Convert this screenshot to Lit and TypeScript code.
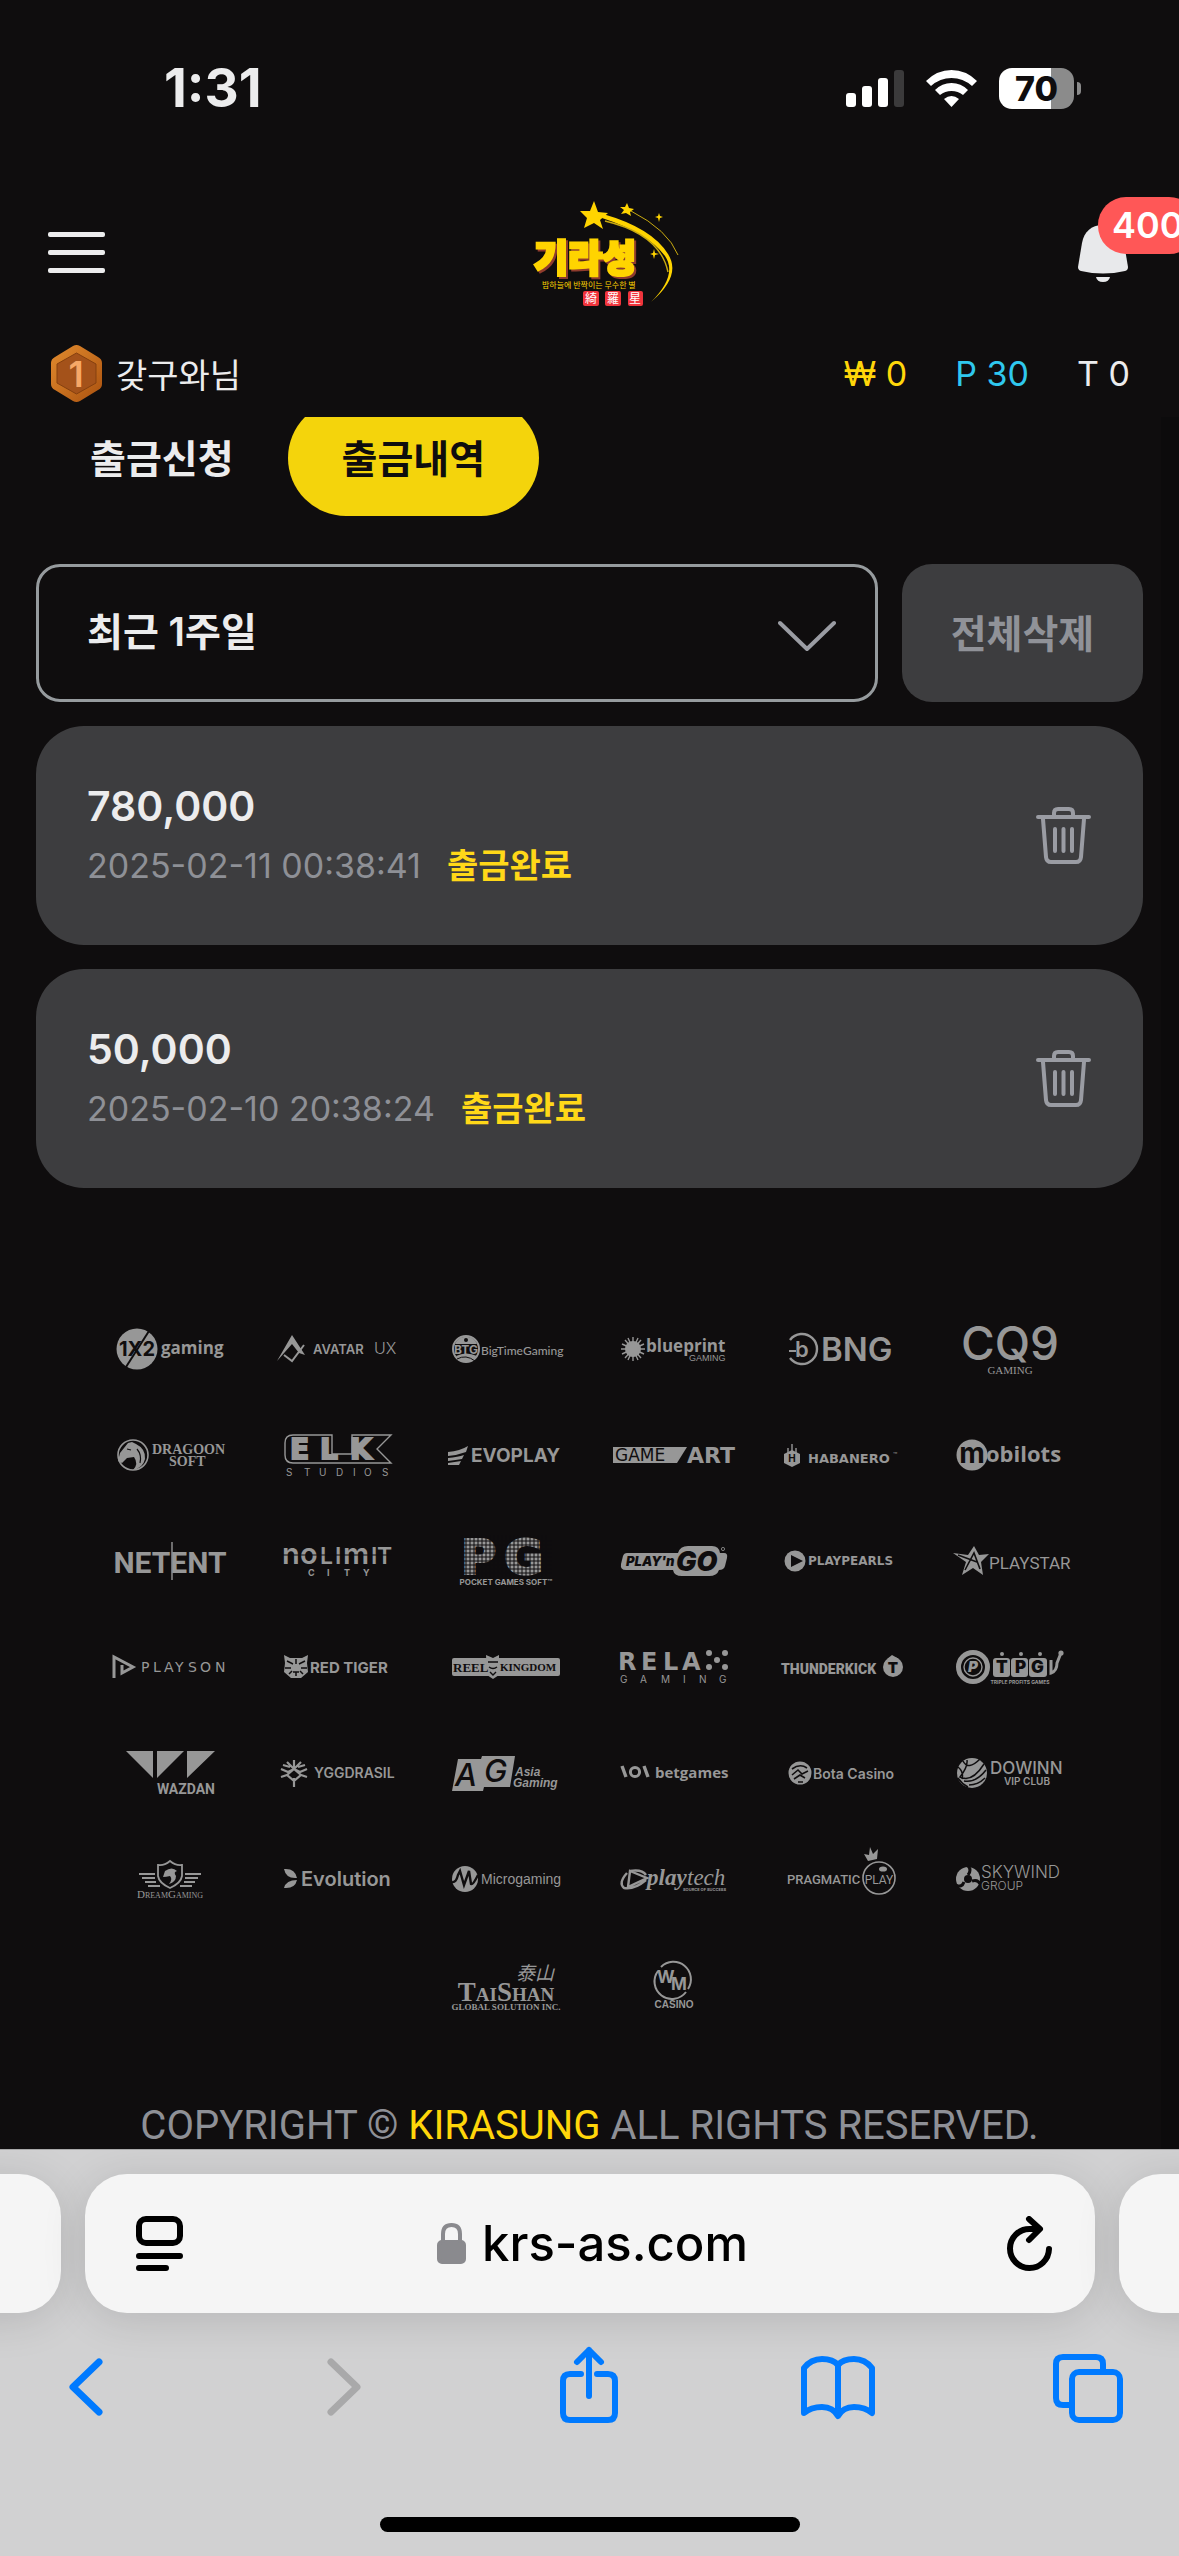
import { LitElement, html, svg, css } from 'lit';
import { customElement, property, state } from 'lit/decorators.js';

interface Withdrawal {
  id: number;
  amount: string;
  date: string;
  status: string;
}

// Every provider mark is drawn around 0,0 in a 168x106 cell
const PROVIDERS = [
  {
    name: '1X2 Gaming',
    art: svg`
      <circle cx="-33" cy="0" r="20.5" />
      <path class="cut" d="M-44 18 L-21 -18" stroke-width="2" />
      <text class="dark bold" x="-33" y="7" font-size="20" text-anchor="middle">1X2</text>
      <text class="open bold" x="-9" y="5" font-size="17">gaming</text>`,
  },
  {
    name: 'Avatar UX',
    art: svg`
      <path d="M-61 12 L-46 -14 L-33 6 L-39 4 L-46 -5 Z" />
      <path class="line" d="M-54 6 L-46 12 L-34 -4" stroke-width="2" />
      <text class="semi" x="-25" y="5" font-size="13">AVATAR</text>
      <text class="light" x="36" y="5" font-size="16">UX</text>`,
  },
  {
    name: 'Big Time Gaming',
    art: svg`
      <circle class="line" cx="-40" cy="0" r="13" stroke-width="2" />
      <path d="M-51 -5 A12 12 0 0 1 -29 -5 Z M-50 7 Q-40 2 -29 7 A12 12 0 0 1 -50 7 Z" />
      <path class="cut" d="M-49 10 Q-40 5 -31 12" stroke-width="1" />
      <circle class="dark" cx="-40" cy="-9" r="2" />
      <text class="bold" x="-40" y="5" font-size="12" text-anchor="middle">BTG</text>
      <text class="lato medium" x="-25" y="6" font-size="12">BigTimeGaming</text>`,
  },
  {
    name: 'Blueprint Gaming',
    art: svg`
      <circle cx="-41" cy="0" r="8" />
      <path class="line" d="M-41 -12V12M-53 0H-29M-49 -9L-33 9M-33 -9L-49 9M-46 -11L-36 11M-36 -11L-46 11M-52 -5L-30 5M-30 -5L-52 5" stroke-width="1.4" />
      <text class="open bold" x="-28" y="3" font-size="17">blueprint</text>
      <text class="liberation" x="15" y="12" font-size="9">GAMING</text>`,
  },
  {
    name: 'BNG',
    art: svg`
      <path class="line" d="M-52 -9 A15 15 0 1 1 -52 9" stroke-width="2.4" />
      <text class="semi" x="-47" y="8" font-size="22">b</text>
      <path class="line" d="M-53 2 H-46" stroke-width="2" />
      <text class="semi" x="-21" y="12" font-size="33">BNG</text>`,
  },
  {
    name: 'CQ9 Gaming',
    art: svg`
      <text class="medium" x="0" y="11" font-size="46" text-anchor="middle">CQ9</text>
      <text class="serif" x="0" y="25" font-size="11" text-anchor="middle">GAMING</text>`,
  },
  {
    name: 'Dragoon Soft',
    art: svg`
      <circle class="line" cx="-37" cy="0" r="15" stroke-width="1.6" />
      <path d="M-52 6 L-50 -2 L-42 -12 L-38 -13 L-34 -11 Q-24 -6 -25 4 Q-27 13 -37 15 Q-31 9 -36 2 L-43 3 L-48 8 Z" />
      <path class="cut" d="M-43 -6 L-39 -5 M-33 -6 Q-28 0 -30 8" stroke-width="1.2" />
      <text class="serif bold" x="-18" y="-1" font-size="14">DRAGOON</text>
      <text class="serif bold" x="-1" y="11" font-size="14">SOFT</text>`,
  },
  {
    name: 'ELK Studios',
    art: svg`
      <path class="line" d="M-45 -20H-6V-1H14V-20H53L39 -6L53 8H-45Q-53 8 -53 0V-12Q-53 -20 -45 -20Z" stroke-width="1.4" />
      <text class="dejavu bold thick" x="-48 -18 12" y="4" font-size="28">ELK</text>
      <text x="-52 -34 -19 -2 15 26 44" y="21" font-size="10">STUDIOS</text>`,
  },
  {
    name: 'Evoplay',
    art: svg`
      <path d="M-58 -3Q-46 -4 -38 -9L-40 -3Q-48 0 -58 1ZM-58 3Q-48 2 -42 0L-44 4Q-50 5 -58 6ZM-58 8L-45 6L-47 10H-58Z" />
      <text class="bold" x="-35" y="7" font-size="19">EVOPLAY</text>`,
  },
  {
    name: 'GameArt',
    art: svg`
      <path d="M-61 -8H13L3 8H-61Z" />
      <text class="dark dejavu" x="-59" y="6" font-size="17">GAME</text>
      <text class="dejavu bold" x="61" y="8" font-size="22" text-anchor="end">ART</text>`,
  },
  {
    name: 'Habanero',
    art: svg`
      <path d="M-50 -5L-42 -1V8L-50 12L-58 8V-1Z" />
      <path class="line" d="M-50 -11V-4M-54 -7V-2M-46 -7V-2" stroke-width="1.4" />
      <text class="dark bold" x="-50" y="7" font-size="10" text-anchor="middle">H</text>
      <text class="dejavu bold" x="-34" y="8" font-size="13">HABANERO</text>
      <text x="51" y="3" font-size="7">™</text>`,
  },
  {
    name: 'Mobilots',
    art: svg`
      <circle cx="-38" cy="0" r="15.5" />
      <text class="dark bold" x="-38" y="8" font-size="28" text-anchor="middle">m</text>
      <text class="open bold" x="-24" y="7" font-size="22">obilots</text>`,
  },
  {
    name: 'NetEnt',
    art: svg`
      <text class="roboto bold" x="0" y="12" font-size="30" text-anchor="middle">NETENT</text>
      <path class="line" d="M2 -19V19" stroke-width="1.4" />`,
  },
  {
    name: 'Nolimit City',
    art: svg`
      <text class="semi" y="3"><tspan x="-56 -38" font-size="29">no</tspan><tspan x="-18 -3" font-size="23">LI</tspan><tspan x="5" font-size="29">m</tspan><tspan x="33 39" font-size="23">IT</tspan></text>
      <path class="cut" d="M-56 -6H54" stroke-width="1" />
      <text class="bold" x="-30 -11 6 25" y="15" font-size="9">CITY</text>`,
  },
  {
    name: 'Pocket Games Soft',
    art: svg`
      <text class="dejavu bold thick" x="-45 -2" y="13" font-size="48">PG</text>
      <path class="cut" stroke-width="1" d="M-46 -20H46M-46 -16H46M-46 -12H46M-46 -8H46M-46 -4H46M-46 0H46M-46 4H46M-46 8H46M-46 12H46M-44 -26V16M-40 -26V16M-36 -26V16M-32 -26V16M-28 -26V16M-24 -26V16M-20 -26V16M-16 -26V16M-12 -26V16M-8 -26V16M-4 -26V16M0 -26V16M4 -26V16M8 -26V16M12 -26V16M16 -26V16M20 -26V16M24 -26V16M28 -26V16M32 -26V16M36 -26V16M40 -26V16" />
      <text class="bold" x="0" y="24" font-size="8" text-anchor="middle">POCKET GAMES SOFT™</text>`,
  },
  {
    name: "Play'n GO",
    art: svg`
      <path d="M-47 -8H4Q6 -15 14 -15H38Q45 -15 46 -8H50Q54 -8 53 -3L51 5Q50 9 45 9Q43 15 35 15H8Q0 15 -1 9H-48Q-54 9 -53 3L-51 -5Q-50 -8 -47 -8Z" />
      <text class="dark black italic" x="-48" y="5" font-size="13">PLAY'n</text>
      <text class="dark black italic" x="2" y="10" font-size="27">GO</text>
      <circle class="line" cx="49" cy="-12" r="1.6" stroke-width="0.8" />`,
  },
  {
    name: 'PlayPearls',
    art: svg`
      <circle cx="-47" cy="0" r="10.5" />
      <path class="dark" d="M-51 -6L-39 0L-51 6Z" />
      <text class="dejavu bold" x="-34" y="4" font-size="12">PLAYPEARLS</text>`,
  },
  {
    name: 'Playstar',
    art: svg`
      <path d="M-36 -15L-31 -6L-21 -7L-29 1L-27 14L-37 7L-48 14L-44 1L-57 -8L-42 -6Z" />
      <path class="cut" d="M-45 9L-36 -8L-30 8M-52 -6L-33 1" stroke-width="1.6" />
      <text class="roboto" x="-21" y="8" font-size="17">PLAYSTAR</text>`,
  },
  {
    name: 'Playson',
    art: svg`
      <path class="line" d="M-56 11V-10L-37 0L-48 6V-2" stroke-width="3" />
      <text class="dejavu" x="-29 -17 -6 5 18 30 45" y="5" font-size="14">PLAYSON</text>`,
  },
  {
    name: 'Red Tiger',
    art: svg`
      <path d="M-54 -12L-48 -9H-36L-30 -12L-31 -4L-30 5L-37 11H-47L-54 5L-53 -4Z" />
      <path class="cut" d="M-51 -6L-45 -3M-33 -6L-39 -3M-42 -8V-3M-53 1L-47 1M-31 1L-37 1M-45 5H-39M-42 5V9M-49 7L-46 4M-35 7L-38 4" stroke-width="1.5" />
      <text class="bold" x="-28" y="6" font-size="15">RED TIGER</text>`,
  },
  {
    name: 'Reel Kingdom',
    art: svg`
      <rect x="-54" y="-9" width="108" height="18" rx="2" />
      <path d="M-20 -12L-13 -9L-7 -12V8L-13 12L-19 8Z" />
      <text class="dark serif bold" x="-53" y="5" font-size="13">REEL</text>
      <path class="cut" d="M-18 -5H-8M-17 0Q-13 3 -9 0M-16 5L-13 8L-10 5" stroke-width="1.4" />
      <text class="dark serif bold" x="-6" y="4" font-size="11">KINGDOM</text>`,
  },
  {
    name: 'Relax Gaming',
    art: svg`
      <text class="dejavu bold" x="-56 -33 -11 8" y="3" font-size="24">RELA</text>
      <circle cx="35" cy="-14" r="3" /><circle cx="51" cy="-14" r="3" /><circle cx="43" cy="-7" r="3" />
      <circle cx="35" cy="0" r="3" /><circle cx="51" cy="0" r="3" />
      <text x="-54 -34 -13 9 25 45" y="16" font-size="10">GAMING</text>`,
  },
  {
    name: 'Thunderkick',
    art: svg`
      <text class="roboto black" x="-61" y="7" font-size="14">THUNDERKICK</text>
      <circle cx="51" cy="0" r="10" /><path d="M45 -8L50 -12L57 -8Z" />
      <text class="dark black" x="51" y="6" font-size="15" text-anchor="middle">T</text>`,
  },
  {
    name: 'Triple Profits Games',
    art: svg`
      <circle class="line" cx="-37" cy="0" r="14.5" stroke-width="5" />
      <circle class="line" cx="-37" cy="0" r="9" stroke-width="1.4" />
      <text class="black italic" x="-37" y="5" font-size="15" text-anchor="middle">P</text>
      <rect x="-17" y="-9" width="17" height="19" rx="3" /><rect x="1" y="-9" width="17" height="19" rx="3" /><rect x="19" y="-9" width="18" height="19" rx="3" />
      <text class="dark black" x="-14 5 21" y="6" font-size="17">TPG</text>
      <circle cx="-8" cy="-13" r="2" /><circle cx="11" cy="-13" r="2" /><circle cx="30" cy="-13" r="2" />
      <path class="line" d="M41 -7V6Q47 4 47 -4L51 -14" stroke-width="3" /><circle cx="51" cy="-14" r="2.6" />
      <text class="bold" x="10" y="17" font-size="5" text-anchor="middle">TRIPLE PROFITS GAMES</text>`,
  },
  {
    name: 'Wazdan',
    art: svg`
      <path d="M-44 -22H-17V5ZM-13 -22H14L-13 5ZM17 -22H45L17 5Z" />
      <text class="roboto bold" x="45" y="21" font-size="14" text-anchor="end">WAZDAN</text>`,
  },
  {
    name: 'Yggdrasil',
    art: svg`
      <path class="line" d="M-44 14V5M-44 8L-51 2L-57 4M-44 8L-37 2L-31 4M-51 2L-44 -4L-37 2M-57 -4L-50 -1L-44 -4L-38 -1L-31 -4M-44 -4V-13M-44 -4L-51 -11M-44 -4L-37 -11M-55 -8L-48 -6M-33 -8L-40 -6" stroke-width="2.2" />
      <text class="semi" x="-24" y="5" font-size="14">YGGDRASIL</text>`,
  },
  {
    name: 'Asia Gaming',
    art: svg`
      <path d="M-48 -14H-25L-24 -17H9L4 14H-22L-23 18H-54Z" />
      <text class="dark medium italic" x="-51" y="13" font-size="31">A</text>
      <text class="dark medium italic" x="-22" y="9" font-size="31">G</text>
      <text class="liberation bold italic" x="9" y="3" font-size="12">Asia</text>
      <text class="liberation bold italic" x="7" y="14" font-size="12">Gaming</text>`,
  },
  {
    name: 'Betgames',
    art: svg`
      <path class="line" d="M-52 -7L-48 4M-30 -7L-26 4" stroke-width="3.4" />
      <circle class="line" cx="-39" cy="-1" r="4.6" stroke-width="3" />
      <text class="open bold" x="-19" y="5" font-size="15">betgames</text>`,
  },
  {
    name: 'Bota Casino',
    art: svg`
      <circle cx="-42" cy="0" r="11.5" />
      <path class="cut" d="M-50 2L-44 -3L-40 1L-34 -2M-48 6L-42 2L-37 5M-50 -4Q-42 -10 -35 -5M-44 9H-39" stroke-width="1.6" />
      <text class="semi" x="-29" y="6" font-size="14">Bota Casino</text>`,
  },
  {
    name: 'Dowinn VIP Club',
    art: svg`
      <circle cx="-38" cy="0" r="15" />
      <path class="cut" d="M-52 -6Q-46 -1 -48 6M-47 -12Q-42 -2 -30 -14M-43 -13Q-42 -6 -50 4Q-38 10 -26 -9M-46 8Q-34 10 -24 -3M-41 12Q-32 12 -25 5M-52 5Q-48 11 -42 14" stroke-width="1.5" />
      <text class="medium" x="-20" y="1" font-size="17">DOWINN</text>
      <text class="semi" x="17" y="12" font-size="10" text-anchor="middle">VIP CLUB</text>`,
  },
  {
    name: 'Dream Gaming',
    art: svg`
      <path class="line" d="M0 -18Q6 -13 12 -14V-3Q11 4 0 9Q-11 4 -12 -3V-14Q-6 -13 0 -18Z" stroke-width="1.8" />
      <path d="M-5 -8Q2 -13 7 -8Q3 -7 6 -3Q6 3 -1 5Q3 0 0 -3Q-4 -2 -7 -2Z" />
      <path class="line" d="M-31 -5H-15M-28 -1H-15M-25 3H-14M-22 7H-10M31 -5H15M28 -1H15M25 3H14M22 7H10" stroke-width="1.8" />
      <text class="serif caps" x="0" y="19" font-size="11" text-anchor="middle">DreamGaming</text>`,
  },
  {
    name: 'Evolution',
    art: svg`
      <path d="M-54 -10Q-43 -11 -41 -1Q-52 0 -54 -10ZM-54 9Q-52 1 -41 1Q-43 10 -54 9Z" />
      <text class="semi" x="-37" y="7" font-size="20">Evolution</text>`,
  },
  {
    name: 'Microgaming',
    art: svg`
      <circle cx="-41" cy="0" r="13" />
      <path class="cut" d="M-54 3Q-50 4 -48 -4L-46 -8L-42 6L-37 -8L-35 5Q-33 6 -28 -4" stroke-width="2.4" />
      <text class="liberation" x="-25" y="5" font-size="14">Microgaming</text>`,
  },
  {
    name: 'Playtech',
    art: svg`
      <path class="line" d="M-44 -8L-27 -1L-46 8ZM-47 -6Q-56 4 -50 9Q-40 11 -28 1M-44 -8Q-32 -10 -28 -4" stroke-width="2.4" />
      <text class="serif bold italic" x="-27" y="6" font-size="23">play</text>
      <text class="serif italic" x="13" y="6" font-size="23">tech</text>
      <text class="bold" x="9" y="12" font-size="4">SOURCE OF SUCCESS</text>`,
  },
  {
    name: 'Pragmatic Play',
    art: svg`
      <text class="roboto medium" x="-55" y="5" font-size="13">PRAGMATIC</text>
      <circle class="line" cx="37" cy="-1" r="16" stroke-width="1.6" />
      <text class="roboto" x="37" y="5" font-size="12" text-anchor="middle">PLAY</text>
      <ellipse cx="41" cy="-10" rx="4" ry="2.6" />
      <path d="M26 -18L22 -25L27 -24L28 -32L31 -25L36 -30L35 -20Z" />`,
  },
  {
    name: 'Skywind Group',
    art: svg`
      <circle cx="-42" cy="0" r="12" />
      <circle class="dark" cx="-42" cy="0" r="4" />
      <path class="cut" d="M-42 -4Q-38 -9 -42 -13M-38 2Q-32 0 -30 5M-46 3Q-48 9 -54 6" stroke-width="3" />
      <text class="light" x="-29" y="-1" font-size="17">SKYWIND</text>
      <text class="light" x="-29" y="11" font-size="12">GROUP</text>`,
  },
  {
    name: 'TaiShan',
    art: svg`
      <text class="kr italic" x="10" y="-5" font-size="19">泰山</text>
      <text class="serif bold caps" x="0" y="16" font-size="27" text-anchor="middle">TaiShan</text>
      <text class="serif bold" x="0" y="25" font-size="9" text-anchor="middle">GLOBAL SOLUTION INC.</text>`,
  },
  {
    name: 'WM Casino',
    art: svg`
      <path class="line" d="M-13 -18A17.5 17.5 0 0 1 14 4M12 7A17.5 17.5 0 0 1 -16 -14" stroke-width="2" />
      <text class="bold" x="-17 -3" y="-2 5" font-size="17">WM</text>
      <text class="liberation bold" x="0" y="23" font-size="10" text-anchor="middle">CASINO</text>`,
  },
];

@customElement('phone-status')
export class PhoneStatus extends LitElement {
  static styles = css`
    :host {
      display: flex;
      align-items: center;
      justify-content: space-between;
      height: 176px;
      padding: 0 98px 0 164px;
      box-sizing: border-box;
    }

    .time {
      font-size: 53px;
      font-weight: 700;
    }

    .icons {
      display: flex;
      align-items: center;
      gap: 22px;
    }

    svg {
      display: block;
      fill: #fff;
    }

    .off {
      fill: #3b3a3b;
    }

    .power {
      display: flex;
      align-items: center;
      gap: 3px;
    }

    .battery {
      width: 75px;
      height: 41px;
      border-radius: 13px;
      font-size: 34px;
      font-weight: 800;
      line-height: 41px;
      text-align: center;
      color: #0f0d0e;
      background: linear-gradient(to right, #fff 70%, #8b8b8b 70%);
    }

    .tip {
      width: 4px;
      height: 13px;
      border-radius: 0 4px 4px 0;
      background: #8b8b8b;
    }
  `;

  render() {
    return html`
      <span class="time">1:31</span>
      <div class="icons">
        <svg width="58" height="37" viewBox="0 0 58 37">
          <rect y="23" width="10" height="14" rx="3" />
          <rect x="16" y="16" width="10" height="21" rx="3" />
          <rect x="32" y="8" width="10" height="29" rx="3" />
          <rect class="off" x="48" width="10" height="37" rx="3" />
        </svg>
        <svg width="51" height="37" viewBox="0 0 51 37">
          <path
            d="M0 11Q11 0 25.500 0T51 11L46 16Q37 8 25.500 8T5 16ZM9 20Q16 13 25.500 13T42 20L37 25Q32 21 25.500 21T14 25ZM18 29Q25.500 23 33 29L25.500 37Z"
          />
        </svg>
        <div class="power">
          <div class="battery">70</div>
          <div class="tip"></div>
        </div>
      </div>
    `;
  }
}

@customElement('site-header')
export class SiteHeader extends LitElement {
  static styles = css`
    :host {
      display: block;
      overflow: hidden;
    }

    .bar {
      display: grid;
      grid-template-columns: 1fr auto 1fr;
      align-items: center;
      height: 154px;
      padding: 0 51px 0 48px;
    }

    button {
      padding: 0;
      border: 0;
      background: none;
      font: inherit;
      color: inherit;
    }

    svg {
      display: block;
      overflow: visible;
    }

    .menu {
      justify-self: start;
    }

    .bell {
      position: relative;
      justify-self: end;
    }

    .badge {
      position: absolute;
      left: 20px;
      top: -28px;
      height: 57px;
      padding: 0 14px;
      border-radius: 28px;
      background: #ff5757;
      color: #fff;
      font-size: 36px;
      font-weight: 600;
      line-height: 57px;
    }

    .kr {
      font-family: 'Noto Sans CJK KR', sans-serif;
    }

    .wordmark {
      font-weight: 900;
      fill: #ffd400;
      stroke: #ffd400;
      stroke-width: 3;
      filter: drop-shadow(2px 2px 0 #8f3b2d);
    }

    .user {
      display: flex;
      align-items: center;
      height: 87px;
      padding: 0 49px 0 51px;
      font-size: 34px;
    }

    .name {
      margin-left: 14px;
      flex: 1;
    }

    .wallet {
      display: flex;
      gap: 48px;
    }

    .won {
      color: #ffd60a;
    }

    .point {
      color: #2fc8ee;
    }
  `;

  @property({ type: Number }) alerts = 0;

  render() {
    return html`
      <div class="bar">
        <button class="menu" aria-label="메뉴">
          <svg width="57" height="42" viewBox="0 0 57 42" fill="#ececed">
            <rect width="57" height="5" rx="2" />
            <rect y="18" width="57" height="5" rx="2" />
            <rect y="36" width="57" height="5" rx="2" />
          </svg>
        </button>
        <svg width="180" height="140" viewBox="0 3 180 140" fill="#ffd400">
          <path
            d="M96 21L100 32L110 33L102 40L105 49L96 43L86 48L89 38L82 31L92 31Z"
          />
          <path d="M129 23L131 28L136 29L132 32L133 36L128 33L123 34L126 30L122 27L127 27Z" />
          <path d="M105 34Q154 48 170 74Q184 96 153 122Q180 95 167 76Q150 53 104 38Z" />
          <g fill="none" stroke="#c9aa10">
            <path d="M107 41Q162 54 170 92" stroke-width="1.4" />
            <path d="M133 31Q170 50 180 75" />
          </g>
          <path
            d="M161 33L162 36L165 37L162 38L161 42L160 38L157 37L160 36ZM156 69L157 73L161 74L157 75L156 79L155 75L152 74L155 73Z"
          />
          <text class="kr wordmark" x="36" y="92" font-size="37">기라성</text>
          <text class="kr" x="44" y="108" font-size="8">밤하늘에 반짝이는 무수한 별</text>
          <g fill="#f0343c">
            <rect x="85" y="111" width="16" height="15" rx="2" />
            <rect x="107" y="111" width="16" height="15" rx="2" />
            <rect x="130" y="111" width="15" height="15" rx="2" />
          </g>
          <text class="kr" x="87 109 131" y="123" font-size="12" fill="#fff">綺羅星</text>
        </svg>
        <button class="bell" aria-label="알림">
          <svg width="50" height="57" viewBox="0 0 50 57" fill="#e8e9eb">
            <path
              d="M25 0C13 0 6 7 4 18L0 42Q0 45 3 46Q25 51 47 46Q50 45 50 42L46 18C44 7 37 0 25 0Z"
            />
            <path d="M18 52H32Q31 57 25 57T18 52Z" />
          </svg>
          <span class="badge">${this.alerts}</span>
        </button>
      </div>
      <div class="user">
        <svg width="51" height="57" viewBox="0 0 51 57">
          <defs>
            <linearGradient id="rim" x1="0" y1="0" x2="1" y2="1">
              <stop offset="0" stop-color="#e08a2e" />
              <stop offset="0.5" stop-color="#c8701f" />
              <stop offset="1" stop-color="#a8500f" />
            </linearGradient>
          </defs>
          <path
            d="M22 1Q25.500 -1 29 1L47 12Q51 14 51 18V39Q51 43 47 45L29 56Q25.500 58 22 56L4 45Q0 43 0 39V18Q0 14 4 12Z"
            fill="url(#rim)"
          />
          <path d="M25.500 8L45 19V38L25.500 49L6 38V19Z" fill="#a4521a" stroke="#85400f" />
          <text
            x="25"
            y="42"
            font-size="36"
            font-weight="600"
            text-anchor="middle"
            fill="#f6a867"
          >
            1
          </text>
        </svg>
        <span class="name">갖구와님</span>
        <div class="wallet">
          <span class="won">₩ 0</span>
          <span class="point">P 30</span>
          <span>T 0</span>
        </div>
      </div>
    `;
  }
}

@customElement('withdraw-history')
export class WithdrawHistory extends LitElement {
  static styles = css`
    :host {
      display: block;
      padding: 0 36px;
    }

    button,
    select {
      font: inherit;
      color: inherit;
    }

    .tabs {
      display: flex;
      margin-top: -17px;
      font-size: 39px;
      font-weight: 600;
    }

    .tabs button {
      height: 116px;
      padding: 0 54px 4px;
      border: 0;
      border-radius: 58px;
      background: none;
    }

    .tabs .on {
      background: #f4d40c;
      color: #0f0d0e;
    }

    .filter {
      display: flex;
      gap: 24px;
      margin: 48px 0 24px;
      font-size: 39px;
      font-weight: 600;
    }

    .period {
      display: grid;
      align-items: center;
      flex: 1;
    }

    .period > * {
      grid-area: 1 / 1;
    }

    .period svg {
      justify-self: end;
      margin-right: 42px;
      pointer-events: none;
    }

    select {
      appearance: none;
      width: 100%;
      height: 138px;
      padding: 0 48px 4px;
      border: 3px solid #969b9e;
      border-radius: 24px;
      background: none;
    }

    .clear {
      width: 241px;
      padding: 0 0 4px;
      border: 0;
      border-radius: 30px;
      background: #3d3d3f;
      color: #909298;
    }

    ul {
      display: grid;
      gap: 24px;
      margin: 0;
      padding: 0;
      list-style: none;
    }

    li {
      display: flex;
      align-items: center;
      justify-content: space-between;
      height: 219px;
      padding: 0 52px 0 51px;
      border-radius: 48px;
      background: #3d3d3f;
    }

    li p {
      margin: 0;
      line-height: 60px;
    }

    .amount {
      font-size: 41px;
      font-weight: 600;
    }

    .meta {
      display: flex;
      gap: 26px;
      font-size: 34px;
      color: #8e9096;
    }

    .status {
      font-weight: 700;
      color: #ffd818;
    }

    li button {
      padding: 0;
      border: 0;
      background: none;
    }

    svg {
      display: block;
      fill: none;
      stroke: #9a9ca3;
      stroke-width: 4;
      stroke-linecap: round;
      stroke-linejoin: round;
    }
  `;

  @state() private items: Withdrawal[] = [
    { id: 1, amount: '780,000', date: '2025-02-11 00:38:41', status: '출금완료' },
    { id: 2, amount: '50,000', date: '2025-02-10 20:38:24', status: '출금완료' },
  ];

  private _remove(id: number) {
    this.items = this.items.filter((item) => item.id !== id);
  }

  render() {
    return html`
      <div class="tabs">
        <button>출금신청</button>
        <button class="on">출금내역</button>
      </div>
      <div class="filter">
        <div class="period">
          <select aria-label="조회 기간">
            <option>최근 1주일</option>
          </select>
          <svg width="58" height="37" viewBox="0 -6 58 37">
            <path d="M2 2L29 28L56 2" />
          </svg>
        </div>
        <button class="clear" @click=${() => (this.items = [])}>전체삭제</button>
      </div>
      <ul>
        ${this.items.map(
          (item) => html`
            <li>
              <div>
                <p class="amount">${item.amount}</p>
                <p class="meta">
                  <span>${item.date}</span>
                  <span class="status">${item.status}</span>
                </p>
              </div>
              <button aria-label="삭제" @click=${() => this._remove(item.id)}>
                <svg width="55" height="57" viewBox="0 0 55 57">
                  <path
                    d="M2 10H53M18 10V6Q18 2 22 2H33Q37 2 37 6V10M7 12L10 50Q10.500 55 15 55H40Q44.500 55 45 50L48 12M19 22V44M27.500 22V44M36 22V44"
                  />
                </svg>
              </button>
            </li>
          `
        )}
      </ul>
    `;
  }
}

@customElement('provider-list')
export class ProviderList extends LitElement {
  static styles = css`
    :host {
      display: flex;
      flex-wrap: wrap;
      justify-content: center;
      max-width: 1008px;
      margin: 108px auto 0;
    }

    svg {
      display: block;
      width: 168px;
      height: 106px;
      fill: #979797;
      font-family: Inter, sans-serif;
    }

    .line {
      fill: none;
      stroke: #979797;
    }

    .cut {
      fill: none;
      stroke: #0f0d0e;
    }

    .thick {
      stroke: #979797;
      stroke-width: 2;
    }

    .dark {
      fill: #0f0d0e;
    }

    .light {
      font-weight: 300;
    }

    .medium {
      font-weight: 500;
    }

    .semi {
      font-weight: 600;
    }

    .bold {
      font-weight: 700;
    }

    .black {
      font-weight: 900;
    }

    .italic {
      font-style: italic;
    }

    .caps {
      font-variant: small-caps;
    }

    .serif {
      font-family: 'Liberation Serif', serif;
    }

    .liberation {
      font-family: 'Liberation Sans', sans-serif;
    }

    .open {
      font-family: 'Open Sans', sans-serif;
    }

    .lato {
      font-family: Lato, sans-serif;
    }

    .roboto {
      font-family: Roboto, sans-serif;
    }

    .dejavu {
      font-family: 'DejaVu Sans', sans-serif;
    }

    .kr {
      font-family: 'Noto Sans CJK KR', sans-serif;
    }
  `;

  render() {
    return PROVIDERS.map(
      (p) => html`
        <svg viewBox="-84 -53 168 106" role="img" aria-label=${p.name}>${p.art}</svg>
      `
    );
  }
}

@customElement('browser-bar')
export class BrowserBar extends LitElement {
  static styles = css`
    :host {
      display: block;
      overflow: hidden;
      padding: 24px 0;
      border-top: 1px solid #a9a9aa;
      background: #d1d1d2;
      color: #000;
    }

    button {
      padding: 0;
      border: 0;
      background: none;
      font: inherit;
      color: inherit;
    }

    svg {
      display: block;
      fill: none;
      stroke: currentColor;
      stroke-width: 6;
      stroke-linecap: round;
      stroke-linejoin: round;
    }

    .pages {
      display: flex;
      justify-content: center;
      gap: 24px;
    }

    .page {
      display: flex;
      align-items: center;
      justify-content: space-between;
      flex: 0 0 calc(100% - 169px);
      height: 139px;
      padding: 0 43px 0 51px;
      box-sizing: border-box;
      border-radius: 42px;
      background: #f5f5f5;
      box-shadow: 0 6px 44px rgba(0, 0, 0, 0.13);
    }

    .url {
      display: flex;
      align-items: center;
      gap: 16px;
      padding-right: 4px;
      font-size: 49px;
      font-weight: 500;
    }

    .lock {
      fill: #8a8a8e;
      stroke: #8a8a8e;
      stroke-width: 4;
    }

    .tools {
      display: flex;
      justify-content: space-between;
      padding: 31px 51px 0 46px;
      color: #007aff;
    }

    .tools button {
      width: 80px;
    }

    .tools button:disabled {
      color: #a9a9aa;
    }

    .home {
      width: 420px;
      height: 15px;
      margin: 93px auto 0;
      border-radius: 8px;
      background: #000;
    }
  `;

  render() {
    return html`
      <div class="pages">
        <div class="page"></div>
        <div class="page">
          <button aria-label="페이지 메뉴">
            <svg width="47" height="55" viewBox="0 0 47 55">
              <rect x="3" y="3" width="41" height="24" rx="7" />
              <path d="M3 40H44M3 52H30" />
            </svg>
          </button>
          <button class="url">
            <svg class="lock" width="29" height="41" viewBox="0 0 29 41">
              <rect x="2" y="19" width="25" height="20" rx="3" />
              <path d="M6 18V11Q6 2 14.500 2T23 11V18" fill="none" />
            </svg>
            krs-as.com
          </button>
          <button aria-label="새로 고침">
            <svg width="45" height="55" viewBox="0 0 45 55">
              <path d="M42 33A19.500 19.500 0 1 1 22.500 13H32M22 3L33 13L22 24" />
            </svg>
          </button>
        </div>
        <div class="page"></div>
      </div>
      <div class="tools">
        <button aria-label="뒤로">
          <svg width="80" height="80" viewBox="0 0 80 80">
            <path d="M53 18L27 43L53 68" stroke-width="7" />
          </svg>
        </button>
        <button aria-label="앞으로" disabled>
          <svg width="80" height="80" viewBox="0 0 80 80">
            <path d="M34 18L60 43L34 68" stroke-width="7" />
          </svg>
        </button>
        <button aria-label="공유">
          <svg width="80" height="80" viewBox="0 0 80 80">
            <path d="M34 30H23Q16 30 16 37V69Q16 76 23 76H61Q68 76 68 69V37Q68 30 61 30H50M42 52V6M30 18L42 6L54 18" />
          </svg>
        </button>
        <button aria-label="책갈피">
          <svg width="80" height="80" viewBox="0 0 80 80">
            <path
              d="M40 21Q35 15 24 15T6 24V69Q13 63 24 63T40 72Q45 63 56 63T74 69V24Q67 15 56 15T40 21V70"
            />
          </svg>
        </button>
        <button aria-label="탭">
          <svg width="80" height="80" viewBox="0 0 80 80">
            <rect x="24" y="28" width="48" height="48" rx="7" />
            <path d="M24 61H15Q8 61 8 54V20Q8 13 15 13H48Q55 13 55 20V28" />
          </svg>
        </button>
      </div>
      <div class="home"></div>
    `;
  }
}

@customElement('app-root')
export class AppRoot extends LitElement {
  static styles = css`
    :host {
      display: flex;
      flex-direction: column;
      min-height: 100vh;
      overflow: hidden;
      background: #0f0d0e;
      color: #ececed;
      font-family: Inter, 'Noto Sans CJK KR', sans-serif;
    }

    main {
      flex: 1;
      overflow: hidden;
      background: linear-gradient(to left, #0c0b0c 18px, transparent 18px);
    }

    footer {
      height: 111px;
      padding-top: 58px;
      box-sizing: border-box;
      text-align: center;
      font-family: Roboto, sans-serif;
      font-size: 40px;
      line-height: 60px;
      color: #8e9096;
      white-space: nowrap;
    }

    footer a {
      color: #ffd60a;
      text-decoration: none;
    }
  `;

  render() {
    return html`
      <phone-status></phone-status>
      <site-header alerts="400"></site-header>
      <main>
        <withdraw-history></withdraw-history>
        <provider-list></provider-list>
        <footer>COPYRIGHT © <a href="#">KIRASUNG</a> ALL RIGHTS RESERVED.</footer>
      </main>
      <browser-bar></browser-bar>
    `;
  }
}
